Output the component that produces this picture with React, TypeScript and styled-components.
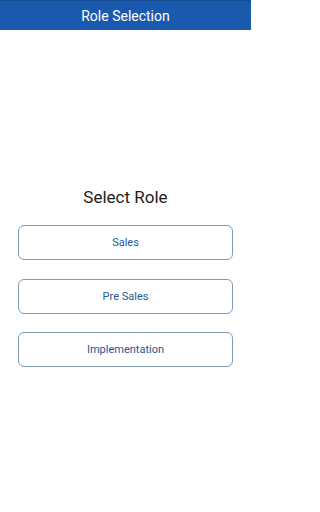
import React from "react";
import styled, { createGlobalStyle } from "styled-components";

const GlobalStyle = createGlobalStyle`
  html, body { margin: 0; padding: 0; background: #ffffff; }
  body { font-family: Roboto, "Noto Sans", "Liberation Sans", sans-serif; }
  * { box-sizing: border-box; }
`;

const Screen = styled.div`
  width: 251px;
  height: 512px;
  display: flex;
  flex-direction: column;
  background: #ffffff;
`;

const Header = styled.header`
  height: 30px;
  background: #1a5aae;
  border-top: 1px solid #164c93;
  display: flex;
  align-items: center;
  justify-content: center;
  color: #ffffff;
  font-size: 14px;
  font-weight: 400;
`;

const Body = styled.main`
  display: flex;
  flex-direction: column;
  align-items: stretch;
  padding: 157px 18px 0;
`;

const Heading = styled.h1`
  margin: 0 0 18px;
  text-align: center;
  font-size: 17px;
  font-weight: 400;
  color: #1c1c1c;
  line-height: 20px;
`;

const RoleList = styled.div`
  display: flex;
  flex-direction: column;
  gap: 18.5px;
`;

const RoleButton = styled.button`
  height: 35px;
  width: 100%;
  border: 1px solid #7d9cb8;
  border-radius: 6px;
  background: #ffffff;
  color: #245896;
  font-family: Roboto, "Noto Sans", "Liberation Sans", sans-serif;
  font-size: 11px;
  font-weight: 400;
  cursor: pointer;
`;

const roles = ["Sales", "Pre Sales", "Implementation"];

export default function App() {
  return (
    <>
      <GlobalStyle />
      <Screen>
        <Header>Role Selection</Header>
        <Body>
          <Heading>Select Role</Heading>
          <RoleList>
            {roles.map((r) => (
              <RoleButton key={r}>{r}</RoleButton>
            ))}
          </RoleList>
        </Body>
      </Screen>
    </>
  );
}
